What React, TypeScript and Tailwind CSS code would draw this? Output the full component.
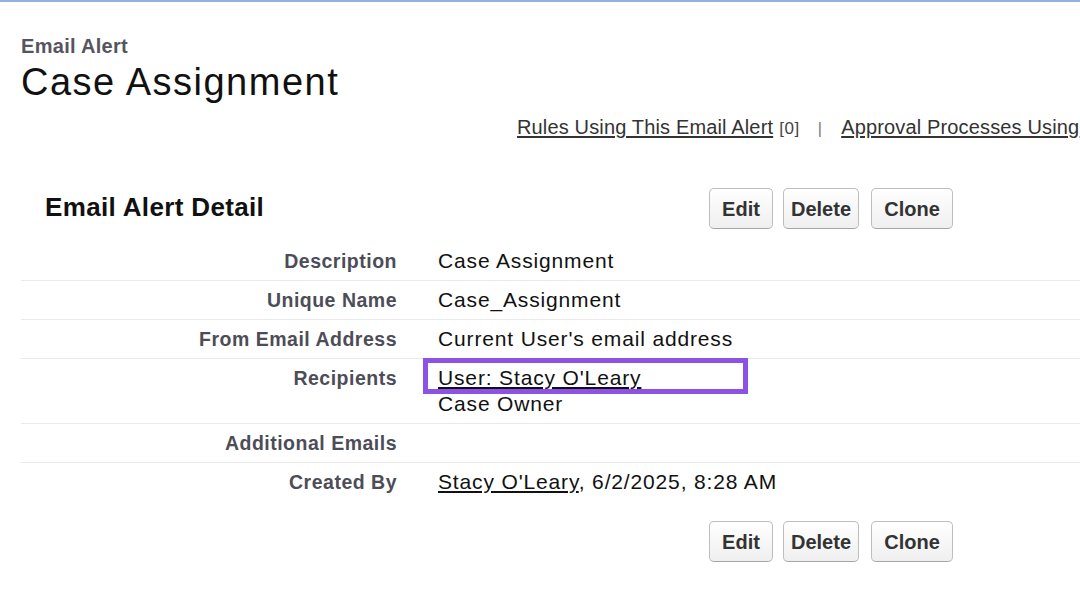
import React from 'react';

const font = { fontFamily: '"Liberation Sans", Arial, Helvetica, sans-serif' };

const Buttons: React.FC = () => (
  <div className="flex items-center">
    <button className="w-[64px] h-[41px] rounded-[5px] border border-[#bdbdbd] border-b-[#a5a5a5] bg-gradient-to-b from-[#ffffff] to-[#efefef] text-[20px] font-bold text-[#333333]">
      Edit
    </button>
    <button className="ml-[10px] w-[76px] h-[41px] rounded-[5px] border border-[#bdbdbd] border-b-[#a5a5a5] bg-gradient-to-b from-[#ffffff] to-[#efefef] text-[20px] font-bold text-[#333333]">
      Delete
    </button>
    <button className="ml-[12px] w-[82px] h-[41px] rounded-[5px] border border-[#bdbdbd] border-b-[#a5a5a5] bg-gradient-to-b from-[#ffffff] to-[#efefef] text-[20px] font-bold text-[#333333]">
      Clone
    </button>
  </div>
);

type Row = { label: string; value: React.ReactNode; last?: boolean; highlight?: boolean };

const App: React.FC = () => {
  const rows: Row[] = [
    { label: 'Description', value: 'Case Assignment' },
    { label: 'Unique Name', value: 'Case_Assignment' },
    { label: 'From Email Address', value: "Current User's email address" },
    {
      label: 'Recipients',
      highlight: true,
      value: (
        <>
          <div><span className="underline underline-offset-[2px]">User: Stacy O'Leary</span></div>
          <div>Case Owner</div>
        </>
      ),
    },
    { label: 'Additional Emails', value: '' },
    {
      label: 'Created By',
      last: true,
      value: (
        <>
          <span className="underline underline-offset-[2px]">Stacy O'Leary</span>, 6/2/2025, 8:28 AM
        </>
      ),
    },
  ];

  return (
    <div className="w-[1080px] h-[610px] overflow-hidden bg-white" style={font}>
      <div className="h-[2px] bg-[#93b3db]" />
      <div className="pl-[21px]">
        <div className="mt-[34px] text-[20px] leading-[20px] font-bold tracking-[0.3px] text-[#55555f]">Email Alert</div>
        <div className="mt-[7px] text-[38px] leading-[38px] tracking-[1.5px] text-[#111111]">Case Assignment</div>

        <div className="mt-[16px] flex items-baseline whitespace-nowrap pl-[496px] text-[20px] leading-[20px] tracking-[0.15px] text-[#333333]">
          <span className="underline underline-offset-[2px]">Rules Using This Email Alert</span>
          <span className="ml-[6px] text-[17px] tracking-[0.6px] text-[#444444]">[0]</span>
          <span className="ml-[18px] text-[16px] text-[#777777]">|</span>
          <span className="ml-[19px] underline underline-offset-[2px]">Approval Processes Using</span>
        </div>

        <div className="mt-[49px] flex items-center">
          <div className="w-[688px] pl-[24px] pb-[4px] text-[26px] leading-[26px] font-bold tracking-[0.35px] text-[#111111]">
            Email Alert Detail
          </div>
          <Buttons />
        </div>

        <div className="mt-[13px]">
          {rows.map(r => (
            <div
              key={r.label}
              className={`flex ${r.last ? '' : 'border-b border-[#e9e9e9]'}`}
            >
              <div className="w-[389px] shrink-0 pr-[13px] pt-[6px] pb-[6px] text-right text-[19.5px] leading-[26px] font-bold tracking-[0.5px] text-[#4d4d58]">
                {r.label}
              </div>
              <div className="relative flex-1 pl-[28px] pt-[6px] pb-[6px] text-[21px] leading-[26px] tracking-[0.85px] text-[#111111]">
                {r.value}
                {r.highlight && (
                  <div className="absolute left-[13px] top-[-1px] w-[325px] h-[36px] border-[5px] border-[#8c52e6]" />
                )}
              </div>
            </div>
          ))}
        </div>

        <div className="mt-[20px] flex">
          <div className="w-[688px]" />
          <Buttons />
        </div>
      </div>
    </div>
  );
};

export default App;
